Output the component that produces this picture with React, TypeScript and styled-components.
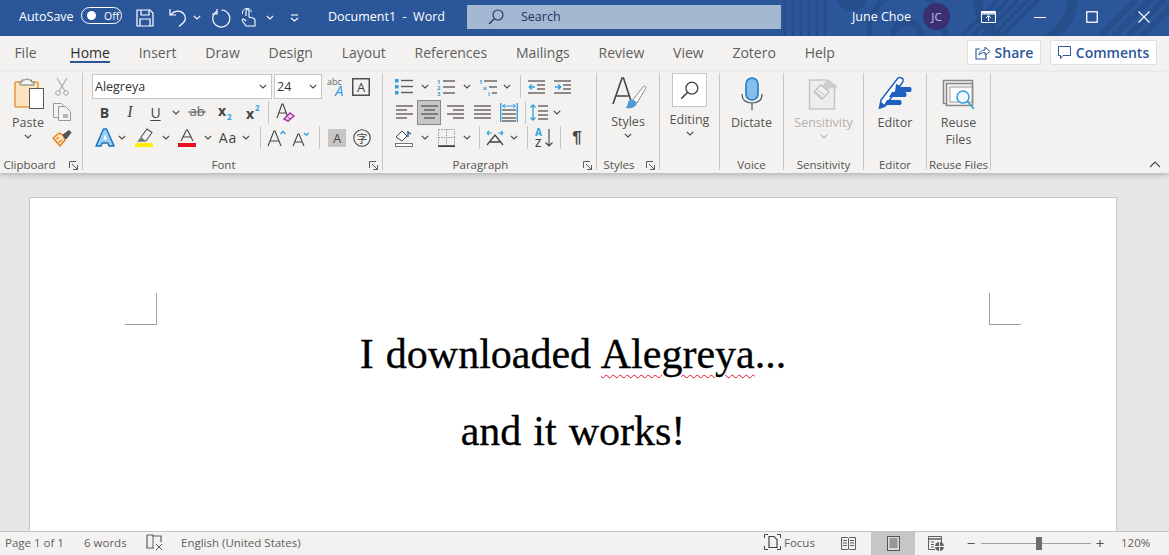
import React from 'react';
import styled, { createGlobalStyle } from 'styled-components';

const GlobalStyle = createGlobalStyle`
	html, body { margin: 0; padding: 0; height: 100%; overflow: hidden; }
	body { font-family: "Open Sans", "Noto Sans", sans-serif; }
	#root { height: 100%; }
`;

const BLUE = '#2b579a';
const INK = '#444342';
const ACCENT = '#2f9fe0';

type SvgProps = { w: number; h: number; children: React.ReactNode };
const Svg = ({ w, h, children }: SvgProps) => (
	<svg width={w} height={h} viewBox={`0 0 ${w} ${h}`} fill="none" style={{ display: 'block', overflow: 'visible' }}>{children}</svg>
);

const Chevron = ({ color = '#444' }: { color?: string }) => (
	<Svg w={8} h={5}><path d="M.8.8 4 4 7.2.8" stroke={color} strokeWidth="1.1" /></Svg>
);

const Lines = ({ rows, color = '#605e5c' }: { rows: [number, number, number][]; color?: string }) => (
	<>{rows.map(([x1, x2, y]) => <path key={`${x1}${y}`} d={`M${x1} ${y}H${x2}`} stroke={color} strokeWidth="1.4" />)}</>
);

/* ---- title bar icons ---- */
const SaveIcon = () => (
	<Svg w={18} h={18}>
		<path d="M1 1h13l3 3v13H1z" stroke="#fff" strokeWidth="1.2" />
		<path d="M5 1v5h8V1M4 17v-7h10v7" stroke="#fff" strokeWidth="1.2" />
	</Svg>
);
const UndoIcon = () => (
	<Svg w={18} h={19}>
		<path d="M1 1v6h6M1.5 7C5 2.500 11 2 14 5s3 7 .5 9.500L10 18.500" stroke="#fff" strokeWidth="1.2" />
	</Svg>
);
const RedoIcon = () => (
	<Svg w={19} h={19}>
		<path d="M5 1v5H0M4.500 3.500A8.500 8.500 0 1 0 9.500 2" stroke="#fff" strokeWidth="1.2" />
	</Svg>
);
const TouchIcon = () => (
	<Svg w={15} h={19}>
		<path d="M5 8V3a1.500 1.500 0 0 1 3 0v6l4 1c1.500.4 2 1.200 2 2.500V18H5l-3.500-5c-.8-1.500.5-2.500 2-1.500L5 13" stroke="#fff" strokeWidth="1.100" />
		<path d="M1.500 6A4.500 4.500 0 0 1 10.500 4" stroke="#fff" strokeWidth="1" />
	</Svg>
);
const CustomizeIcon = () => (
	<Svg w={9} h={8}>
		<path d="M1 1h7" stroke="#fff" strokeWidth="1.100" /><path d="M1 4l3.500 3L8 4" stroke="#fff" strokeWidth="1.100" />
	</Svg>
);
const SearchGlass = ({ color, size = 16 }: { color: string; size?: number }) => (
	<svg width={size} height={size} viewBox="0 0 16 16" fill="none" style={{ display: 'block' }}>
		<circle cx="10" cy="6" r="5" stroke={color} strokeWidth="1.100" />
		<path d="M6.400 9.600 1 15" stroke={color} strokeWidth="1.300" />
	</svg>
);
const RibbonDisplayIcon = () => (
	<Svg w={15} h={12}>
		<path d="M.5.500h14v11H.500zM.5 3h14" stroke="#fff" />
		<path d="M.5 1.500h14" stroke="#fff" strokeWidth="2" />
		<path d="M7.500 10V5M5 7l2.500-2.500L10 7" stroke="#fff" />
	</Svg>
);

/* ---- clipboard ---- */
const PasteIcon = () => (
	<Svg w={34} h={33}>
		<g transform="translate(3 0)">
			<rect x="1" y="5" width="23" height="25" rx="1" fill="#fbe3c0" stroke="#e99a3c" strokeWidth="1.600" />
			<path d="M8 5V3h3a2.500 2.500 0 0 1 4 0h2.500v2H20v3H6V5z" fill="#f3f2f1" stroke="#777" />
			<rect x="15.500" y="11.500" width="14" height="20" fill="#fff" stroke="#555" />
		</g>
	</Svg>
);
const CutIcon = () => (
	<Svg w={14} h={19}>
		<path d="M2 1l8 13M12 1 4 14" stroke="#a8a6a4" strokeWidth="1.100" />
		<circle cx="3" cy="16" r="2.300" stroke="#a8a6a4" /><circle cx="11" cy="16" r="2.300" stroke="#a8a6a4" />
	</Svg>
);
const CopyIcon = () => (
	<Svg w={18} h={18}>
		<path d="M.5.500h8l2 2v12H.500z" fill="#f3f2f1" stroke="#9a9896" />
		<path d="M5.500 3.500h7l5 5v9h-12z" fill="#f3f2f1" stroke="#9a9896" />
		<path d="M10 11h5v4h-5z" fill="#b8b6b4" />
	</Svg>
);
const PainterIcon = () => (
	<Svg w={18} h={17}>
		<path d="M10 5 6 3 0 8l7 8 5-6z" fill="#fde3bc" stroke="#e67e1a" strokeWidth="1.400" />
		<path d="M3 9l3-1.500M5.500 12.500 9 10" stroke="#e67e1a" strokeWidth="1.200" />
		<path d="M10 5l6-4.500 2 2-5 6.500z" fill="#555" stroke="#444" />
	</Svg>
);

/* ---- font ---- */
const AbcA = () => (
	<Svg w={20} h={20}>
		<text x="0" y="8" fontSize="9" fontFamily="Open Sans" fill="#666">abc</text>
		<text x="8" y="19" fontSize="15" fontStyle="italic" fontFamily="Open Sans" fill={ACCENT}>A</text>
	</Svg>
);
const BoxA = () => (
	<Svg w={18} h={18}>
		<rect x=".75" y=".75" width="16.500" height="16.500" stroke="#444" strokeWidth="1.400" />
		<text x="9" y="14" fontSize="13" textAnchor="middle" fontFamily="Open Sans" fill="#444">A</text>
	</Svg>
);
const Strike = () => (
	<Svg w={18} h={14}>
		<text x="9" y="11" fontSize="13" textAnchor="middle" fontFamily="Open Sans" fill="#605e5c">ab</text>
		<path d="M0 7h18" stroke="#605e5c" />
	</Svg>
);
const SubScript = ({ up }: { up?: boolean }) => (
	<Svg w={15} h={15}>
		<text x="0" y={up ? 14 : 11} fontSize="14" fontWeight="700" fontFamily="Open Sans" fill="#444">x</text>
		<text x="9" y={up ? 6 : 15} fontSize="8" fontWeight="700" fontFamily="Open Sans" fill={ACCENT}>2</text>
	</Svg>
);
const ClearFormat = () => (
	<Svg w={18} h={19}>
		<path d="M1 15 6 1h1l5 14M3 10h8" stroke="#444" strokeWidth="1.100" />
		<path d="M8 16l6-6 4 3-6 5z" fill="#f3d3f0" stroke="#a83aa8" strokeWidth="1.500" />
		<path d="M11 13l3 3" stroke="#a83aa8" />
	</Svg>
);
const FontColorA = ({ bar }: { bar: string }) => (
	<Svg w={18} h={18}>
		<path d="M3 12 8.500 1h1L15 12M5 8h8" stroke="#444" strokeWidth="1.100" />
		<rect y="14" width="18" height="4" fill={bar} />
	</Svg>
);
const Highlighter = () => (
	<Svg w={18} h={18}>
		<path d="M6 8l6-8 5 3.500-6 8.500H6z" stroke="#555" strokeWidth="1.100" />
		<path d="M2 13l4-5 5 4z" fill="#777" />
		<rect y="14" width="18" height="4" fill="#ffee00" />
	</Svg>
);
const BlueA = () => (
	<Svg w={18} h={18}>
		<path d="M7.500 0h3L18 17h-5l-1.200-3H6.200L5 17H0z" fill="#9bd0f5" stroke="#1a70c0" strokeWidth="1.500" strokeLinejoin="round" />
		<path d="M7.300 10.500 9 5.500l1.700 5z" fill="#fff" />
	</Svg>
);
const GrowA = ({ down }: { down?: boolean }) => (
	<Svg w={18} h={16}>
		<path d={down ? 'M0 16 5 4h1l5 12M2 12h7' : 'M0 16 6 1h1l6 15M2.500 11h8'} stroke="#444" strokeWidth="1.100" />
		<path d={down ? 'M11 3l2.500 2L16 3' : 'M12.500 4 15 1.500 17.500 4'} stroke={ACCENT} strokeWidth="1.400" />
	</Svg>
);
const PhoneticGuide = () => (
	<Svg w={18} h={18}>
		<circle cx="9" cy="9" r="8.200" stroke="#444" strokeWidth="1.100" />
		<text x="9" y="13.500" fontSize="11" textAnchor="middle" fontFamily="Noto Sans CJK SC" fill="#444">字</text>
	</Svg>
);

/* ---- paragraph ---- */
const Bullets = () => (
	<Svg w={18} h={17}>
		<path d="M0 1h3.500v3.500H0zM0 7h3.500v3.500H0zM0 13h3.500v3.500H0z" fill={ACCENT} />
		<Lines rows={[[6, 18, 2.500], [6, 18, 8.500], [6, 18, 14.500]]} />
	</Svg>
);
const Numbered = () => (
	<Svg w={18} h={18}>
		<text x="0" y="6" fontSize="6" fontWeight="700" fill={ACCENT} fontFamily="Open Sans">1</text>
		<text x="0" y="12" fontSize="6" fontWeight="700" fill={ACCENT} fontFamily="Open Sans">2</text>
		<text x="0" y="18" fontSize="6" fontWeight="700" fill={ACCENT} fontFamily="Open Sans">3</text>
		<Lines rows={[[6, 18, 3], [6, 18, 9], [6, 18, 15]]} />
	</Svg>
);
const Multilevel = () => (
	<Svg w={18} h={18}>
		<text x="0" y="6" fontSize="6" fontWeight="700" fill={ACCENT} fontFamily="Open Sans">1</text>
		<text x="4" y="12" fontSize="6" fontWeight="700" fill={ACCENT} fontFamily="Open Sans">a</text>
		<text x="9" y="18" fontSize="6" fontWeight="700" fill={ACCENT} fontFamily="Open Sans">i</text>
		<Lines rows={[[5, 18, 3], [10, 18, 9], [13, 18, 15]]} />
	</Svg>
);
const IndentIcon = ({ out }: { out?: boolean }) => (
	<Svg w={17} h={14}>
		<Lines rows={[[0, 17, 1], [9, 17, 5], [9, 17, 9], [0, 17, 13]]} />
		<path d={out ? 'M1 7h6M1 7l3-2.500M1 7l3 2.500' : 'M1 7h6M7 7 4 4.500M7 7l-3 2.500'} stroke={ACCENT} strokeWidth="1.300" />
	</Svg>
);
const AlignIcon = ({ rows }: { rows: [number, number, number][] }) => (
	<Svg w={17} h={15}><Lines rows={rows} /></Svg>
);
const Distributed = () => (
	<Svg w={18} h={19}>
		<path d="M.7 0v19M17.300 0v19" stroke={ACCENT} strokeWidth="1.300" />
		<Lines rows={[[2, 16, 7], [2, 16, 11], [2, 16, 15], [2, 16, 18]]} />
		<path d="M2.500 3h13M2.500 3 5 1M2.500 3 5 5M15.500 3 13 1M15.500 3 13 5" stroke={ACCENT} />
	</Svg>
);
const LineSpacing = () => (
	<Svg w={18} h={17}>
		<path d="M3 1v15M.5 3.500 3 1l2.500 2.500M.5 13.500 3 16l2.500-2.500" stroke={ACCENT} strokeWidth="1.300" />
		<Lines rows={[[8, 18, 2], [8, 18, 7], [8, 18, 11], [8, 18, 15]]} />
	</Svg>
);
const Shading = () => (
	<Svg w={18} h={18}>
		<path d="M1 8l6-6 5 5-5 5z" fill="#fff" stroke="#444" />
		<path d="M13 8V3l3 2" stroke={BLUE} strokeWidth="1.400" />
		<rect x=".5" y="14.500" width="17" height="3" fill="#fff" stroke="#777" />
	</Svg>
);
const BordersIcon = () => (
	<Svg w={17} h={18}>
		<path d="M.5.500h16v16H.500zM8.500.500v16M.5 8.500h16" stroke="#999" strokeDasharray="1.500 1" />
		<path d="M0 17.200h17" stroke="#222" strokeWidth="1.400" />
	</Svg>
);
const AsianLayout = () => (
	<Svg w={18} h={16}>
		<path d="M1 15 9 5l8 10M4 12h10" stroke="#444" strokeWidth="1.300" />
		<path d="M1 3h5M1 3l2-2M1 3l2 2M17 3h-5M17 3l-2-2M17 3l-2 2" stroke={ACCENT} strokeWidth="1.200" />
	</Svg>
);
const SortIcon = () => (
	<Svg w={19} h={19}>
		<text x="0" y="8" fontSize="10" fontWeight="700" fill={ACCENT} fontFamily="Open Sans">A</text>
		<text x="0" y="19" fontSize="11" fontWeight="600" fill="#444" fontFamily="Open Sans">Z</text>
		<path d="M14 1v17M10.500 14.500 14 18l3.500-3.500" stroke="#444" strokeWidth="1.100" />
	</Svg>
);

/* ---- large ribbon icons ---- */
const StylesIcon = () => (
	<Svg w={38} h={33}>
		<path d="M4 28 13 2h1.500L23 28M7.500 20h12" stroke="#444" strokeWidth="1.600" />
		<path d="M23 25 34 11c1.500-1.800 3.500-.5 2.700 1.300L28 27z" fill="#fff" stroke="#888" />
		<path d="M21 24c3-1 6 1 6.500 3 .5 4-6 6-11 5 3-2 1.500-7 4.500-8z" fill="#4a9bdc" />
	</Svg>
);
const MicIcon = () => (
	<Svg w={22} h={33}>
		<rect x="5" y="1" width="12" height="22" rx="6" fill="#86bdea" stroke="#1f78c8" strokeWidth="1.600" />
		<path d="M1 17c0 7 4 9 10 9s10-2 10-9" stroke="#555" strokeWidth="1.200" />
		<path d="M11 26v7" stroke="#555" strokeWidth="1.200" />
	</Svg>
);
const SensitivityIcon = () => (
	<Svg w={31} h={33}>
		<path d="M1.500 3h16l9 5v24h-25z" fill="#ededec" stroke="#c8c6c4" strokeWidth="1.500" />
		<path d="M6 15l7-7 8 7-7 7z" fill="#f3f2f1" stroke="#c0bebc" strokeWidth="1.300" />
		<path d="M8 15l6 5M10 13l6 5" stroke="#c0bebc" />
		<path d="M15 8l5-6 4 3-1 1 6 2-1 4-6-1-3 3z" fill="#d0cecc" />
	</Svg>
);
const EditorIcon = () => (
	<Svg w={34} h={34}>
		<path d="M1.500 32 3 24 20 2c1-1 4 0 5 1 1 2 0 3-1 4L7 30z" fill="#fff" stroke="#1f5fc0" strokeWidth="1.500" />
		<path d="M1 33l2-7 5 4z" fill="#1f5fc0" />
		<path d="M18 8l5 2-2 1h11c2 0 2 5 0 5H17zM14 16h13c2 0 2 5 0 5H11zM9 24h13c2 0 2 5 0 5H6z" fill="#1f5fc0" />
	</Svg>
);
const ReuseIcon = () => (
	<Svg w={33} h={31}>
		<path d="M1.500 1.500h29v23h-29z" fill="#f3f2f1" stroke="#8a8886" strokeWidth="1.500" />
		<path d="M4.500 4.500h26v22h-26z" fill="#f3f2f1" stroke="#8a8886" strokeWidth="1.500" />
		<rect x="8" y="8" width="22" height="15" fill="#fff" stroke="#999" />
		<circle cx="21" cy="18" r="6" fill="#f3f8fc" stroke={ACCENT} strokeWidth="1.500" />
		<path d="M25.500 22.500 32 30" stroke={ACCENT} strokeWidth="1.500" />
	</Svg>
);
const Launcher = () => (
	<Svg w={9} h={9}>
		<path d="M.5 7V.5H7M3 3l5.500 5.500M8.500 4v4.500H4" stroke="#605e5c" />
	</Svg>
);

/* ---- status bar ---- */
const ProofIcon = () => (
	<Svg w={17} h={16}>
		<path d="M1 1h6v1h8v6M1 1v13h7" stroke="#605e5c" strokeWidth="1.200" />
		<path d="M7 2v12M10 10l6 6M16 10l-6 6" stroke="#605e5c" />
	</Svg>
);
const FocusIcon = () => (
	<Svg w={17} h={16}>
		<path d="M.5 4V.5H4M13 .5h3.500V4M.5 12v3.500H4M13 15.500h3.500V12" stroke="#444" />
		<path d="M5 2.500h5l3 3v8H5z" stroke="#444" strokeWidth="1.200" />
	</Svg>
);
const ReadIcon = () => (
	<Svg w={15} h={13}>
		<path d="M.5.500h6l1 1 1-1h6v12h-6l-1-.5-1 .5h-6zM7.500 1.500V12" stroke="#605e5c" />
		<path d="M2 3.500h4M2 6h4M2 8.500h4M9 3.500h4M9 6h4M9 8.500h4" stroke="#605e5c" />
	</Svg>
);
const PrintIcon = () => (
	<Svg w={13} h={15}>
		<rect x=".5" y=".5" width="12" height="14" fill="#dcdad8" stroke="#555" />
		<path d="M2.500 3h8M2.500 5h8M2.500 7h8M2.500 9h8M2.500 11h8" stroke="#555" />
	</Svg>
);
const WebIcon = () => (
	<Svg w={16} h={15}>
		<path d="M.5.500h13V8M.5.500v13H7" stroke="#605e5c" />
		<path d="M.5 3h13" stroke="#605e5c" strokeWidth="1.500" />
		<path d="M3 6h3M3 8.500h3M3 11h3" stroke="#605e5c" />
		<circle cx="11.500" cy="10.500" r="4.500" fill="#605e5c" />
		<path d="M7 10.500h9M11.500 6v9" stroke="#f3f2f1" />
	</Svg>
);
const ShareIcon = () => (
	<Svg w={15} h={14}>
		<path d="M5 3H1v10h10V8" stroke={BLUE} strokeWidth="1.100" />
		<path d="M4 9c0-3 3-5 6-5V1l5 4.500L10 9V6.500C8 6.500 6 7 4 9z" stroke={BLUE} />
	</Svg>
);
const CommentIcon = () => (
	<Svg w={13} h={13}>
		<path d="M.5.500h12v9H5L2.500 12.500v-3h-2z" stroke={BLUE} />
	</Svg>
);

/* ---- page ---- */
const Shell = styled.div`
	display: flex;
	flex-direction: column;
	height: 555px;
	width: 1169px;
	overflow: hidden;
	background: #e6e6e6;
`;

const TitleBar = styled.div`
	position: relative;
	flex: none;
	display: flex;
	align-items: center;
	box-sizing: border-box;
	height: 36px;
	padding-bottom: 3px;
	background: ${BLUE};
	color: #fff;
	font-size: 12.5px;
	overflow: hidden;
`;

const TitleArt = styled.svg`
	position: absolute;
	top: 0;
	right: 0;
`;

const TitleItem = styled.div<{ $w: number }>`
	position: relative;
	flex: none;
	width: ${p => p.$w}px;
	margin-top: 2px;
	display: flex;
	align-items: center;
	justify-content: center;
	white-space: nowrap;
`;

const AutoSave = styled.div`
	position: relative;
	flex: none;
	margin-left: 19px;
	width: 62px;
`;

const Toggle = styled.div`
	position: relative;
	flex: none;
	display: flex;
	align-items: center;
	width: 41px;
	height: 17px;
	margin-top: -2px;
	box-sizing: border-box;
	border: 1px solid #fff;
	border-radius: 9px;
	padding-left: 5px;
	gap: 8px;
	font-size: 10.5px;
	&::before {
		content: '';
		width: 9px;
		height: 9px;
		border-radius: 50%;
		background: #fff;
	}
`;

const DocTitle = styled.div`
	position: relative;
	flex: none;
	width: 139px;
	white-space: pre;
`;

const SearchBox = styled.div`
	position: relative;
	flex: none;
	display: flex;
	align-items: center;
	width: 314px;
	height: 24px;
	padding-left: 21px;
	box-sizing: border-box;
	gap: 17px;
	background: #a5b8d2;
	color: #1d3560;
`;

const UserName = styled.div`
	position: relative;
	flex: none;
	margin-left: 71px;
	width: 71px;
`;

const Avatar = styled.div`
	position: relative;
	flex: none;
	width: 27px;
	height: 27px;
	border-radius: 50%;
	background: #3b2f72;
	color: #c9c3e0;
	font-size: 11.5px;
	display: flex;
	align-items: center;
	justify-content: center;
`;

const WindowButtons = styled.div`
	position: relative;
	flex: none;
	display: flex;
	margin-left: 12px;
`;

const WindowButton = styled.div`
	width: 52px;
	display: flex;
	justify-content: center;
	align-items: center;
`;

const TabRow = styled.div`
	flex: none;
	display: flex;
	align-items: center;
	box-sizing: border-box;
	height: 36px;
	padding-bottom: 3px;
	background: #f3f2f1;
	font-size: 14px;
	color: #605e5c;
`;

const Tab = styled.div<{ $active?: boolean; $plain?: boolean }>`
	position: relative;
	padding: 0 14.4px;
	margin-right: ${p => (p.$plain ? 5 : 0)}px;
	color: ${p => (p.$active ? '#2f2e2d' : '#605e5c')};
	white-space: nowrap;
	&::after {
		content: '';
		display: ${p => (p.$active ? 'block' : 'none')};
		position: absolute;
		left: 14px;
		right: 14px;
		bottom: -1px;
		height: 2px;
		background: ${BLUE};
	}
`;

const TabSpacer = styled.div`
	flex: 1;
`;

const PillButton = styled.div<{ $w: number }>`
	display: flex;
	align-items: center;
	justify-content: center;
	gap: 5px;
	width: ${p => p.$w}px;
	height: 25px;
	margin-right: 9px;
	box-sizing: border-box;
	background: #fff;
	border: 1px solid #e1dfdd;
	border-radius: 2px;
	color: ${BLUE};
	font-size: 14px;
	font-weight: 600;
	&:last-child { margin-right: 12px; }
`;

const Ribbon = styled.div`
	position: relative;
	flex: none;
	display: flex;
	height: 101px;
	background: #f3f2f1;
	box-shadow: 0 2px 5px rgba(0, 0, 0, 0.22);
	z-index: 1;
`;

const Group = styled.div<{ $w: number }>`
	position: relative;
	flex: none;
	display: flex;
	flex-direction: column;
	box-sizing: border-box;
	width: ${p => p.$w}px;
	height: 97px;
	margin-top: 1px;
	border-right: 1px solid #c8c6c4;
`;

const GroupBody = styled.div<{ $pad?: number }>`
	flex: 1;
	display: flex;
	padding-left: ${p => p.$pad ?? 0}px;
`;

const GroupLabel = styled.div<{ $endPad?: number }>`
	flex: none;
	height: 18px;
	line-height: 18px;
	margin-bottom: -4px;
	padding-right: ${p => p.$endPad ?? 0}px;
	text-align: center;
	font-size: 11.5px;
	color: #55534f;
	white-space: nowrap;
`;

const LaunchSlot = styled.span`
	position: absolute;
	right: 4px;
	bottom: 0;
`;

const LargeButton = styled.div<{ $muted?: boolean; $w?: number; $top?: number }>`
	flex: ${p => (p.$w ? 'none' : 1)};
	width: ${p => (p.$w ? `${p.$w}px` : 'auto')};
	display: flex;
	flex-direction: column;
	align-items: center;
	padding-top: ${p => p.$top ?? 4}px;
	font-size: 12.5px;
	line-height: 17px;
	color: ${p => (p.$muted ? '#b3b0ad' : '#55534f')};
	text-align: center;
`;

const LargeIcon = styled.div`
	height: 33px;
	margin-bottom: 4px;
	display: flex;
	align-items: flex-end;
`;

const ChevronSlot = styled.div`
	margin-top: 3px;
`;

const ActiveGlassBox = styled.div`
	box-sizing: border-box;
	width: 35px;
	height: 34px;
	margin-bottom: 4px;
	background: #fff;
	border: 1px solid #c8c6c4;
	display: flex;
	align-items: center;
	justify-content: center;
`;

const SmallColumn = styled.div`
	flex: none;
	display: flex;
	flex-direction: column;
	width: 26px;
`;

const Stack = styled.div`
	display: flex;
	flex-direction: column;
	padding-top: 1px;
`;

const Row = styled.div<{ $h?: number }>`
	display: flex;
	align-items: center;
	height: ${p => p.$h ?? 25}px;
`;

const IconBtn = styled.div<{ $w?: number; $on?: boolean }>`
	flex: none;
	box-sizing: border-box;
	width: ${p => p.$w ?? 24}px;
	height: 25px;
	display: flex;
	align-items: center;
	justify-content: center;
	background: ${p => (p.$on ? '#c8c6c4' : 'transparent')};
	border: 1px solid ${p => (p.$on ? '#8a8886' : 'transparent')};
	color: ${INK};
`;

const VSep = styled.div`
	flex: none;
	width: 1px;
	height: 23px;
	background: #c8c6c4;
`;

const Combo = styled.div<{ $w: number }>`
	flex: none;
	box-sizing: border-box;
	display: flex;
	align-items: center;
	justify-content: space-between;
	width: ${p => p.$w}px;
	height: 25px;
	margin-right: 2px;
	padding: 0 4px 0 2px;
	background: #fff;
	border: 1px solid #c8c6c4;
	font-size: 12.5px;
	color: #333;
`;

const Bold = styled.span`
	font-weight: 700;
	font-size: 14px;
`;

const Italic = styled.span`
	font-family: "Liberation Serif", serif;
	font-style: italic;
	font-size: 16px;
`;

const Under = styled.span`
	font-size: 14px;
	text-decoration: underline;
	text-underline-offset: 2px;
`;

const GrayBox = styled.div`
	width: 18px;
	height: 18px;
	background: #c8c6c4;
	color: #444;
	font-size: 13px;
	display: flex;
	align-items: center;
	justify-content: center;
`;

const Pilcrow = styled.span`
	font-family: "Liberation Sans", sans-serif;
	font-size: 17px;
	font-weight: 700;
	color: #444;
`;

const CaseLabel = styled.span`
	font-size: 14px;
	letter-spacing: 1px;
	color: #444;
`;

const CollapseSlot = styled.div`
	position: absolute;
	right: 8px;
	bottom: 5px;
`;

const DocArea = styled.div`
	flex: 1;
	min-height: 0;
	padding: 24px 52px 0 29px;
	overflow: hidden;
`;

const Sheet = styled.div`
	box-sizing: border-box;
	height: 400px;
	background: #fff;
	border: 1px solid #c6c6c6;
	padding: 95px 95px 0;
`;

const MarginMarks = styled.div`
	display: flex;
	justify-content: space-between;
	height: 32px;
`;

const Mark = styled.div<{ $side: 'l' | 'r' }>`
	width: 32px;
	height: 32px;
	box-sizing: border-box;
	border-bottom: 1px solid #a0a0a0;
	${p => (p.$side === 'l' ? 'border-right' : 'border-left')}: 1px solid #a0a0a0;
`;

const Para = styled.p<{ $top: number }>`
	margin: ${p => p.$top}px 0 0;
	text-align: center;
	font-family: "Liberation Serif", serif;
	font-size: 42px;
	line-height: 50px;
	word-spacing: 1.5px;
	color: #000;
	-webkit-text-stroke: 0.3px #000;
`;

const Squiggle = styled.span`
	text-decoration: underline wavy #e81123 1px;
	text-underline-offset: 6px;
`;

const StatusBar = styled.div`
	flex: none;
	display: flex;
	align-items: center;
	height: 24px;
	box-sizing: border-box;
	background: #f3f2f1;
	border-top: 1px solid #c6c6c6;
	font-size: 11.5px;
	color: #5f5e5c;
	position: relative;
	z-index: 1;
`;

const StatusText = styled.div<{ $w: number; $left?: number }>`
	flex: none;
	box-sizing: border-box;
	width: ${p => p.$w}px;
	margin-left: ${p => p.$left ?? 0}px;
	padding-bottom: 3px;
	white-space: nowrap;
	display: flex;
	align-items: center;
`;

const ViewBtn = styled.div<{ $on?: boolean; $w: number; $after?: number }>`
	flex: none;
	width: ${p => p.$w}px;
	height: 23px;
	margin-right: ${p => p.$after ?? 0}px;
	display: flex;
	align-items: center;
	justify-content: center;
	background: ${p => (p.$on ? '#c8c6c4' : 'transparent')};
`;

const ZoomTrack = styled.div`
	position: relative;
	flex: none;
	width: 110px;
	height: 1px;
	background: #a19f9d;
	margin: 0 3px 0 4px;
`;

const ZoomThumb = styled.div`
	position: absolute;
	left: 55px;
	top: -6px;
	width: 6px;
	height: 13px;
	background: #6f6d6b;
`;

const ZoomSign = styled.div`
	flex: none;
	width: 12px;
	text-align: center;
	font-size: 15px;
	line-height: 1;
	color: #55534f;
`;

const tabs = ['Insert', 'Draw', 'Design', 'Layout', 'References', 'Mailings', 'Review', 'View', 'Zotero', 'Help'];

const LEFT: [number, number, number][] = [[0, 17, 1], [0, 11, 5], [0, 17, 9], [0, 11, 13]];
const CENTER: [number, number, number][] = [[0, 17, 1], [3, 14, 5], [0, 17, 9], [3, 14, 13]];
const RIGHT: [number, number, number][] = [[0, 17, 1], [6, 17, 5], [0, 17, 9], [6, 17, 13]];
const JUSTIFY: [number, number, number][] = [[0, 17, 1], [0, 17, 5], [0, 17, 9], [0, 17, 13]];

export default function App() {
	return (
		<Shell>
			<GlobalStyle />
			<TitleBar>
				<TitleArt width="469" height="36" viewBox="0 0 469 36" fill="none">
					<g stroke="#264e8b">
						<circle cx="152" cy="-4" r="15" fill="#264e8b" stroke="none" />
						<path d="M85 36V0M93 36V0M101 36V0M109 36V0M117 36V0M125 36V0" strokeWidth="3" />
						<circle cx="207" cy="36" r="14" strokeWidth="7" />
						<circle cx="207" cy="30" r="38" strokeWidth="6" />
						<path d="M262 36 298 0M272 36 308 0M282 36 318 0M292 36 328 0M302 36 338 0" strokeWidth="4" />
						<circle cx="325" cy="-4" r="48" strokeWidth="10" />
						<path d="M400 36 436 0M414 36 450 0M428 36 464 0M442 36 478 0" strokeWidth="6" />
					</g>
				</TitleArt>
				<AutoSave>AutoSave</AutoSave>
				<Toggle>Off</Toggle>
				<TitleItem $w={14} />
				<TitleItem $w={18}><SaveIcon /></TitleItem>
				<TitleItem $w={15} />
				<TitleItem $w={18}><UndoIcon /></TitleItem>
				<TitleItem $w={20}><Chevron color="#fff" /></TitleItem>
				<TitleItem $w={5} />
				<TitleItem $w={19}><RedoIcon /></TitleItem>
				<TitleItem $w={10} />
				<TitleItem $w={15}><TouchIcon /></TitleItem>
				<TitleItem $w={28}><Chevron color="#fff" /></TitleItem>
				<TitleItem $w={20}><CustomizeIcon /></TitleItem>
				<TitleItem $w={24} />
				<DocTitle>Document1  -  Word</DocTitle>
				<SearchBox>
					<SearchGlass color="#1d3560" />
					<span>Search</span>
				</SearchBox>
				<UserName>June Choe</UserName>
				<Avatar>JC</Avatar>
				<WindowButtons>
					<WindowButton><RibbonDisplayIcon /></WindowButton>
					<WindowButton><Svg w={12} h={12}><path d="M0 6.500h12" stroke="#fff" /></Svg></WindowButton>
					<WindowButton><Svg w={12} h={12}><rect x=".75" y=".75" width="10.500" height="10.500" stroke="#fff" strokeWidth="1.300" /></Svg></WindowButton>
					<WindowButton><Svg w={12} h={12}><path d="M.5.500l11 11M11.500.500l-11 11" stroke="#fff" strokeWidth="1.100" /></Svg></WindowButton>
				</WindowButtons>
			</TitleBar>

			<TabRow>
				<Tab $plain>File</Tab>
				<Tab $active>Home</Tab>
				{tabs.map(t => <Tab key={t}>{t}</Tab>)}
				<TabSpacer />
				<PillButton $w={74}><ShareIcon />Share</PillButton>
				<PillButton $w={107}><CommentIcon />Comments</PillButton>
			</TabRow>

			<Ribbon>
				<Group $w={83}>
					<GroupBody>
						<LargeButton $w={56}>
							<LargeIcon><PasteIcon /></LargeIcon>
							Paste
							<ChevronSlot><Chevron /></ChevronSlot>
						</LargeButton>
						<SmallColumn>
							<Row $h={26}><IconBtn $w={12}><CutIcon /></IconBtn></Row>
							<Row $h={26}><IconBtn $w={12}><CopyIcon /></IconBtn></Row>
							<Row $h={26}><IconBtn $w={12}><PainterIcon /></IconBtn></Row>
						</SmallColumn>
					</GroupBody>
					<GroupLabel $endPad={23}>Clipboard<LaunchSlot><Launcher /></LaunchSlot></GroupLabel>
				</Group>

				<Group $w={300}>
					<GroupBody $pad={9}>
						<Stack>
							<Row>
								<Combo $w={180}>Alegreya<Chevron /></Combo>
								<Combo $w={48}>24<Chevron /></Combo>
								<IconBtn $w={26}><AbcA /></IconBtn>
								<IconBtn $w={22}><BoxA /></IconBtn>
							</Row>
							<Row $h={26}>
								<IconBtn $w={25}><Bold>B</Bold></IconBtn>
								<IconBtn $w={26}><Italic>I</Italic></IconBtn>
								<IconBtn $w={25}><Under>U</Under></IconBtn>
								<IconBtn $w={16}><Chevron /></IconBtn>
								<IconBtn $w={26}><Strike /></IconBtn>
								<IconBtn $w={30}><SubScript /></IconBtn>
								<IconBtn $w={26}><SubScript up /></IconBtn>
								<IconBtn $w={2} />
								<VSep />
								<IconBtn $w={32}><ClearFormat /></IconBtn>
							</Row>
							<Row>
								<IconBtn $w={25}><BlueA /></IconBtn>
								<IconBtn $w={10}><Chevron /></IconBtn>
								<IconBtn $w={34}><Highlighter /></IconBtn>
								<IconBtn $w={10}><Chevron /></IconBtn>
								<IconBtn $w={32}><FontColorA bar="#e81123" /></IconBtn>
								<IconBtn $w={10}><Chevron /></IconBtn>
								<IconBtn $w={30}><CaseLabel>Aa</CaseLabel></IconBtn>
								<IconBtn $w={6}><Chevron /></IconBtn>
								<IconBtn $w={11} />
								<VSep />
								<IconBtn $w={32}><GrowA /></IconBtn>
								<IconBtn $w={18}><GrowA down /></IconBtn>
								<IconBtn $w={8} />
								<VSep />
								<IconBtn $w={34}><GrayBox>A</GrayBox></IconBtn>
								<IconBtn $w={16}><PhoneticGuide /></IconBtn>
							</Row>
						</Stack>
					</GroupBody>
					<GroupLabel $endPad={18}>Font<LaunchSlot><Launcher /></LaunchSlot></GroupLabel>
				</Group>

				<Group $w={214}>
					<GroupBody $pad={8}>
						<Stack>
							<Row>
								<IconBtn $w={26}><Bullets /></IconBtn>
								<IconBtn $w={16}><Chevron /></IconBtn>
								<IconBtn $w={26}><Numbered /></IconBtn>
								<IconBtn $w={16}><Chevron /></IconBtn>
								<IconBtn $w={26}><Multilevel /></IconBtn>
								<IconBtn $w={12}><Chevron /></IconBtn>
								<IconBtn $w={7} />
								<VSep />
								<IconBtn $w={30}><IndentIcon out /></IconBtn>
								<IconBtn $w={23}><IndentIcon /></IconBtn>
							</Row>
							<Row $h={26}>
								<IconBtn $w={26}><AlignIcon rows={LEFT} /></IconBtn>
								<IconBtn $w={24} $on><AlignIcon rows={CENTER} /></IconBtn>
								<IconBtn $w={28}><AlignIcon rows={RIGHT} /></IconBtn>
								<IconBtn $w={26}><AlignIcon rows={JUSTIFY} /></IconBtn>
								<IconBtn $w={28}><Distributed /></IconBtn>
								<IconBtn $w={2} />
								<VSep />
								<IconBtn $w={26}><LineSpacing /></IconBtn>
								<IconBtn $w={10}><Chevron /></IconBtn>
							</Row>
							<Row>
								<IconBtn $w={26}><Shading /></IconBtn>
								<IconBtn $w={16}><Chevron /></IconBtn>
								<IconBtn $w={26}><BordersIcon /></IconBtn>
								<IconBtn $w={16}><Chevron /></IconBtn>
								<IconBtn $w={4} />
								<VSep />
								<IconBtn $w={30}><AsianLayout /></IconBtn>
								<IconBtn $w={8}><Chevron /></IconBtn>
								<IconBtn $w={9} />
								<VSep />
								<IconBtn $w={32}><SortIcon /></IconBtn>
								<VSep />
								<IconBtn $w={32}><Pilcrow>¶</Pilcrow></IconBtn>
							</Row>
						</Stack>
					</GroupBody>
					<GroupLabel $endPad={18}>Paragraph<LaunchSlot><Launcher /></LaunchSlot></GroupLabel>
				</Group>

				<Group $w={63}>
					<GroupBody>
						<LargeButton $top={3}>
							<LargeIcon><StylesIcon /></LargeIcon>
							Styles
							<ChevronSlot><Chevron /></ChevronSlot>
						</LargeButton>
					</GroupBody>
					<GroupLabel $endPad={18}>Styles<LaunchSlot><Launcher /></LaunchSlot></GroupLabel>
				</Group>

				<Group $w={60}>
					<GroupBody>
						<LargeButton $top={0}>
							<ActiveGlassBox><SearchGlass color="#444" size={19} /></ActiveGlassBox>
							Editing
							<ChevronSlot><Chevron /></ChevronSlot>
						</LargeButton>
					</GroupBody>
					<GroupLabel>&nbsp;</GroupLabel>
				</Group>

				<Group $w={64}>
					<GroupBody>
						<LargeButton>
							<LargeIcon><MicIcon /></LargeIcon>
							Dictate
						</LargeButton>
					</GroupBody>
					<GroupLabel>Voice</GroupLabel>
				</Group>

				<Group $w={80}>
					<GroupBody>
						<LargeButton $muted>
							<LargeIcon><SensitivityIcon /></LargeIcon>
							Sensitivity
							<ChevronSlot><Chevron color="#b3b0ad" /></ChevronSlot>
						</LargeButton>
					</GroupBody>
					<GroupLabel>Sensitivity</GroupLabel>
				</Group>

				<Group $w={63}>
					<GroupBody>
						<LargeButton>
							<LargeIcon><EditorIcon /></LargeIcon>
							Editor
						</LargeButton>
					</GroupBody>
					<GroupLabel>Editor</GroupLabel>
				</Group>

				<Group $w={64}>
					<GroupBody>
						<LargeButton>
							<LargeIcon><ReuseIcon /></LargeIcon>
							Reuse
							<br />
							Files
						</LargeButton>
					</GroupBody>
					<GroupLabel>Reuse Files</GroupLabel>
				</Group>

				<CollapseSlot>
					<Svg w={12} h={7}><path d="M1 6l5-5 5 5" stroke="#444" strokeWidth="1.100" /></Svg>
				</CollapseSlot>
			</Ribbon>

			<DocArea>
				<Sheet>
					<MarginMarks>
						<Mark $side="l" />
						<Mark $side="r" />
					</MarginMarks>
					<Para $top={4}>I downloaded <Squiggle>Alegreya</Squiggle>...</Para>
					<Para $top={27}>and it works!</Para>
				</Sheet>
			</DocArea>

			<StatusBar>
				<StatusText $w={79} $left={5}>Page 1 of 1</StatusText>
				<StatusText $w={62}>6 words</StatusText>
				<StatusText $w={35}><ProofIcon /></StatusText>
				<StatusText $w={583}>English (United States)</StatusText>
				<StatusText $w={67}><FocusIcon />&nbsp;Focus</StatusText>
				<ViewBtn $w={34} $after={6}><ReadIcon /></ViewBtn>
				<ViewBtn $w={44} $on><PrintIcon /></ViewBtn>
				<ViewBtn $w={42} $after={8}><WebIcon /></ViewBtn>
				<ZoomSign>−</ZoomSign>
				<ZoomTrack><ZoomThumb /></ZoomTrack>
				<ZoomSign>+</ZoomSign>
				<StatusText $w={40} $left={15}>120%</StatusText>
			</StatusBar>
		</Shell>
	);
}
